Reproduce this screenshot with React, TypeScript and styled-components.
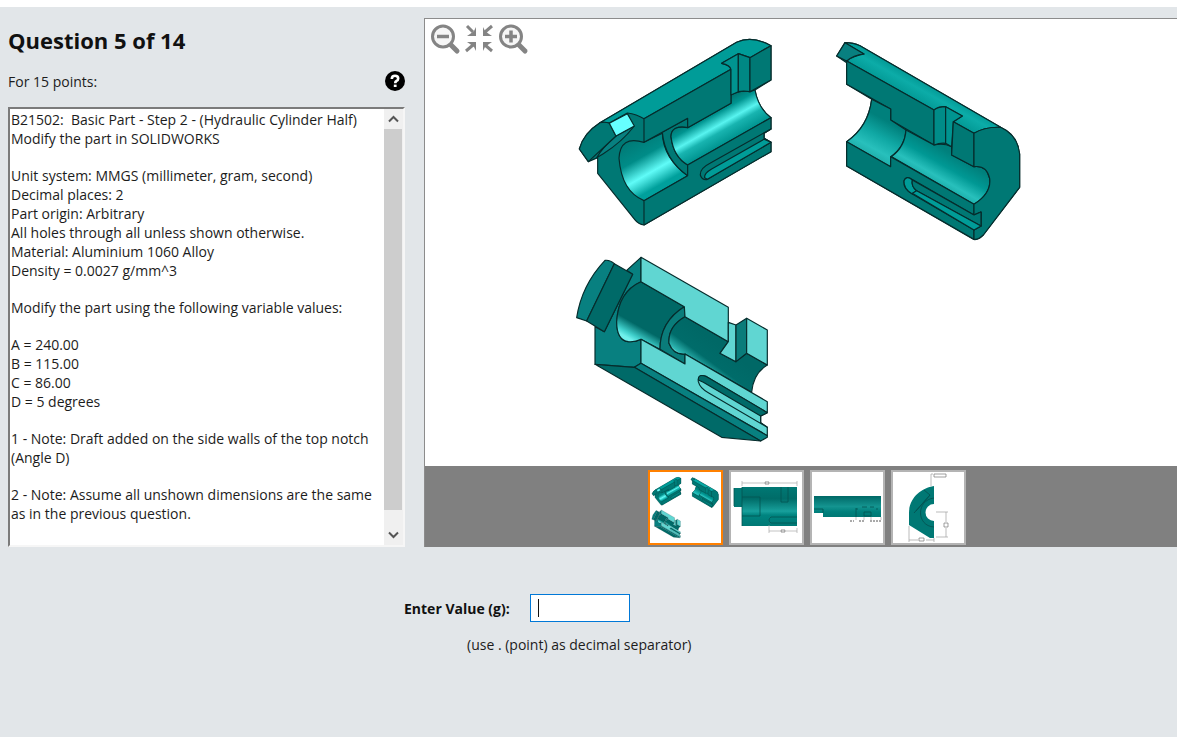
import React from "react";
import styled, { createGlobalStyle } from "styled-components";

const GlobalStyle = createGlobalStyle`
  * { box-sizing: border-box; }
  body {
    margin: 0;
    background: #e2e6e9;
    color: #1c1c1c;
    font-family: "Open Sans", "Noto Sans", sans-serif;
    font-size: 14px;
    line-height: 19px;
  }
`;

const Page = styled.main`
  border-top: 7px solid #fff;
  min-height: 100vh;
`;

const Columns = styled.div`
  display: grid;
  grid-template-columns: 397px minmax(0, 1fr);
  column-gap: 19px;
  padding: 11px 0 0 8px;
`;

const QuestionColumn = styled.section`
  display: flex;
  flex-direction: column;
`;

const Title = styled.h1`
  margin: 8px 0 0;
  font-size: 22px;
  line-height: 28px;
  font-weight: 700;
  color: #111;
`;

const PointsRow = styled.div`
  display: flex;
  justify-content: space-between;
  align-items: center;
  margin-top: 15px;
  height: 24px;
`;

const HelpButton = styled.button`
  display: flex;
  padding: 0;
  border: 0;
  background: none;
`;

const TextPanel = styled.div`
  display: flex;
  flex: 1;
  margin-top: 14px;
  background: #fff;
  border: 2px solid;
  border-color: #7b7b7b #f6f6f6 #f6f6f6 #7b7b7b;
`;

const Description = styled.div`
  flex: 1;
  padding: 1px 0 0 1px;
`;

const Paragraph = styled.p`
  margin: 0 0 18px;
  white-space: pre;
`;

const Scrollbar = styled.div`
  display: flex;
  flex-direction: column;
  width: 19px;
  padding-right: 1px;
  background: #f0f0f0;
`;

const ScrollButton = styled.button`
  display: flex;
  align-items: center;
  justify-content: center;
  height: 20px;
  padding: 0;
  border: 0;
  background: #f0f0f0;
`;

const ScrollThumb = styled.div`
  flex: 1;
  margin-bottom: 15px;
  background: #cdcdcd;
`;

const Viewer = styled.section`
  display: flex;
  flex-direction: column;
  border: solid #8c8c8c;
  border-width: 1px 0 0 1px;
  background: #fff;
`;

const Stage = styled.div`
  position: relative;
  display: flex;
  justify-content: center;
  padding: 6px 0 11px;
`;

const Tools = styled.div`
  position: absolute;
  top: 4px;
  left: 4px;
  display: flex;
  gap: 2px;
`;

const ToolButton = styled.button`
  display: flex;
  padding: 0;
  border: 0;
  background: none;
`;

const Thumbs = styled.div`
  display: flex;
  justify-content: center;
  gap: 6px;
  padding: 4px 0 2px 12px;
  background: #808080;
`;

const Thumb = styled.button<{ $active?: boolean }>`
  display: flex;
  width: 75px;
  height: 75px;
  padding: 0;
  background: #fff;
  border: 2px solid ${(p) => (p.$active ? "#ff8000" : "#b4b4b4")};
`;

const AnswerForm = styled.form`
  padding: 47px 0 0 404px;
`;

const AnswerRow = styled.div`
  display: flex;
  align-items: center;
  gap: 20px;
`;

const AnswerLabel = styled.label`
  width: 106px;
  font-weight: 700;
  color: #111;
  white-space: nowrap;
`;

const AnswerInput = styled.input`
  width: 100px;
  height: 28px;
  padding: 0 8px;
  border: 1px solid #0078d7;
  outline: none;
  font: inherit;
  caret-color: transparent;
  background: #fff linear-gradient(#111, #111) 7px 4px / 1px 18px no-repeat;
`;

const Hint = styled.p`
  margin: 13px 0 0 63px;
`;

const DARK = "#007874";
const LIGHT = "#009c98";
const SHADE = "#006a68";
const MID = "#088080";
const PALE = "#60d6d2";

type Shape = [d: string, fill: string];

const topLeftView: Shape[] = [
  ["M83 445V398L55 410L28 372Q40 325 90 293L500 52Q545 30 603 62V165L555 195Q565 250 603 278V312L582 325V340L603 352V380L222 600Q205 598 195 585Z", DARK],
  ["M90 293L500 52Q545 30 603 62L540 98L505 86L455 115Q480 120 483 133L222 281Q200 268 172 264L118 294Q104 291 90 293Z", LIGHT],
  ["M80 398Q95 370 138 333L193 303Q155 352 100 386Z", MID],
  ["M28 372Q40 325 90 293Q108 290 118 295L138 333L55 410Z", DARK],
  ["M118 295L172 266L193 303L138 333Z", "#66ffff"],
  ["M222 352Q150 330 147 400Q155 500 222 527L353 452Q280 400 277 325Z", "url(#boreA)"],
  ["M277 322L353 280V308Q305 300 303 335Q310 395 353 420V452Q285 405 277 322Z", DARK],
  ["M353 308Q303 300 303 335Q310 395 353 420L603 278Q565 250 555 195L540 200Q510 195 483 210V235Z", "url(#boreA2)"],
  ["M222 281L483 133V235L353 308V280L222 352Z", DARK],
  ["M455 115L505 86V200L483 210V133Q480 120 455 115Z", "#009490"],
  ["M505 86L540 98V200Q520 196 505 200Z", "#008884"],
  ["M540 98L603 62V165L540 200Z", DARK],
  ["M222 527L353 452V420L603 278V312L582 325V340L603 352V380L222 600Z", DARK],
  ["M603 312L420 415Q390 430 391 450Q395 465 410 464L603 352L582 340V325Z", DARK],
  ["M582 343L425 432Q402 445 404 458L412 463L603 352Z", LIGHT],
];

const topRightView: Shape[] = [
  ["M35 78L60 38Q85 38 105 47L527 292Q578 315 584 372V472L475 615Q455 632 445 628L65 408V335Q130 290 140 208L65 163V98Z", DARK],
  ["M60 38Q85 38 105 47L527 292Q480 290 447 310L385 275L412 258L362 230Q340 230 327 240L65 93Q85 78 117 72Z", "url(#top)"],
  ["M35 78L60 38L117 72Q85 75 65 93Z", MID],
  ["M65 93L327 240V345L197 270V237L65 163Z", DARK],
  ["M140 208L197 237V270L243 300Q240 350 197 380V410L65 335Q130 290 140 208Z", "url(#boreB)"],
  ["M243 300L327 345Q355 338 380 350V375L447 410Q485 405 494 445Q500 490 447 523L200 380Q240 350 243 300Z", "url(#boreB2)"],
  ["M327 240Q340 230 362 230V340Q345 338 327 345Z", "#008c88"],
  ["M362 230L412 258L385 275L380 350L362 340Z", "#009490"],
  ["M385 275L447 310V410L380 375Z", DARK],
  ["M65 335L197 410V380L447 523V628L65 408Z", DARK],
  ["M447 310Q480 290 527 292Q578 315 584 372V472L475 615Q460 630 447 628V600L468 588V546L447 555V523Q500 490 494 445Q485 405 447 410Z", DARK],
  ["M447 555L265 450Q240 435 237 455Q236 478 262 492L447 600L468 588V546Z", DARK],
  ["M237 452Q245 435 262 450Q258 470 275 482L262 492Q235 476 237 452Z", LIGHT],
  ["M262 450L447 555L468 546V588L275 482Q258 470 262 450Z", DARK],
  ["M262 490L275 482L468 588L447 600Z", LIGHT],
];

const bottomView: Shape[] = [
  ["M185 76L228 37V110Q160 140 155 230Q155 285 190 290Q210 292 228 283V355L208 367L90 358V245L118 260L203 88Z", MID],
  ["M35 218Q50 120 120 46Q135 44 148 56Q105 145 65 228Z", MID],
  ["M148 56L203 88L118 260L65 228Q105 145 148 56Z", SHADE],
  ["M228 110L358 185Q285 230 285 313L228 283Q210 292 190 290Q155 285 155 230Q160 140 228 110Z", "url(#boreC)"],
  ["M358 185L360 215Q308 245 312 295Q325 330 360 327V357L285 313Q285 230 358 185Z", "#0a7c7a"],
  ["M360 215L490 290L465 325L513 350L545 325L607 360Q565 385 560 442L360 327Q325 330 312 295Q308 245 360 215Z", "url(#boreC2)"],
  ["M228 37L490 187V290L360 215L358 185L228 110Z", PALE],
  ["M490 232L513 240V350L465 325L490 290Z", PALE],
  ["M513 240L545 220V325L513 350Z", "#0a7c7a"],
  ["M545 220L607 255V360L545 325Z", PALE],
  ["M228 283L360 357V327L607 470V500L587 513V533L607 547V572L228 355Z", PALE],
  ["M607 503L425 395Q398 385 400 410Q405 430 430 443L607 547L587 533V513Z", PALE],
  ["M607 503L425 395Q398 385 400 405L415 412L587 513Z", SHADE],
  ["M228 355L607 572V577L587 588L208 367Z", MID],
  ["M90 358L208 367L587 588L470 577Z", SHADE],
];

const Solid = ({ shapes, transform }: { shapes: Shape[]; transform: string }) => (
  <g transform={transform} stroke="#062c2c" strokeWidth="3.5" strokeLinejoin="round">
    {shapes.map(([d, fill]) => (
      <path key={d} d={d} fill={fill} />
    ))}
  </g>
);

type Stops = [number, string][];
const Gradient = ({ id, from, to, stops }: { id: string; from: [number, number]; to: [number, number]; stops: Stops }) => (
  <linearGradient id={id} gradientUnits="userSpaceOnUse" x1={from[0]} y1={from[1]} x2={to[0]} y2={to[1]}>
    {stops.map(([offset, color]) => (
      <stop key={offset} offset={offset} stopColor={color} />
    ))}
  </linearGradient>
);

const IsometricViews = ({ width, height }: { width: number; height: number }) => (
  <svg width={width} height={height} viewBox="0 0 472 430" role="img" aria-label="Isometric views of the cylinder half">
    <defs>
      <Gradient id="boreA" from={[180, 340]} to={[262, 484]} stops={[[0, "#007874"], [0.4, "#008c88"], [0.72, "#60fcf8"], [0.82, "#40dcd8"], [1, "#00a09c"]]} />
      <Gradient id="boreA2" from={[400, 262]} to={[455, 360]} stops={[[0, "#007874"], [0.2, "#009490"], [0.5, "#58f4f0"], [0.68, "#18b4b0"], [1, "#009490"]]} />
      <Gradient id="top" from={[300, 150]} to={[262, 218]} stops={[[0, "#009490"], [0.4, "#0caca8"], [1, "#009490"]]} />
      <Gradient id="boreB" from={[180, 270]} to={[125, 370]} stops={[[0, "#00807c"], [0.45, "#10a8a4"], [0.8, "#28c0bc"], [1, "#20b0ac"]]} />
      <Gradient id="boreB2" from={[376, 368]} to={[322, 462]} stops={[[0, "#00807c"], [0.4, "#009894"], [0.75, "#28c0bc"], [1, "#18a8a4"]]} />
      <Gradient id="boreC" from={[262, 185]} to={[204, 287]} stops={[[0, "#006866"], [0.6, "#006866"], [0.88, "#40d0cc"], [1, "#70f0ec"]]} />
      <Gradient id="boreC2" from={[450, 290]} to={[395, 365]} stops={[[0, "#006866"], [0.6, "#006c6a"], [0.95, "#30b8b4"], [1, "#60d8d4"]]} />
    </defs>
    <Solid shapes={topLeftView} transform="translate(5 0) scale(.3333)" />
    <Solid shapes={topRightView} transform="translate(260 5) scale(.3333)" />
    <Solid shapes={bottomView} transform="translate(0 220) scale(.3333)" />
  </svg>
);

const SideThumb = () => (
  <svg width="71" height="71" viewBox="0 0 71 71">
    <defs>
      <linearGradient id="side" x1="0" x2="0" y1="0" y2="1">
        <stop offset="0" stopColor="#007874" />
        <stop offset=".3" stopColor="#006c68" />
        <stop offset=".62" stopColor="#18a09c" />
        <stop offset=".72" stopColor="#008480" />
        <stop offset="1" stopColor="#007874" />
      </linearGradient>
    </defs>
    <path d="M3 16h9v19H3z" fill="#007874" />
    <path d="M11 15h55v39H11z" fill="url(#side)" />
    <path d="M11 15v39M11 25h18v19H11M50 15v15h7V15M3 16v18M66 45H40q-4 3 0 6h26" fill="none" stroke="#045452" strokeWidth=".8" />
    <path d="M11 11h22m6 0h27M11 9v5m55-5v5M38 59h11m6 0h11M38 53v8m28-5v5" stroke="#aaa" strokeWidth=".7" />
    <path d="M34 10h4v2h-4zM50 58h4v2h-4z" fill="none" stroke="#666" strokeWidth=".7" />
  </svg>
);

const BottomThumb = () => (
  <svg width="71" height="71" viewBox="0 0 71 71">
    <defs>
      <linearGradient id="under" x1="0" x2="0" y1="0" y2="1">
        <stop offset="0" stopColor="#006866" />
        <stop offset=".5" stopColor="#149490" />
        <stop offset=".75" stopColor="#00807c" />
        <stop offset="1" stopColor="#007874" />
      </linearGradient>
    </defs>
    <path d="M2 24h67v21H11v-4H2z" fill="url(#under)" />
    <path d="M2 37h9v4M44 36v9M52 40h7v4h-7zM50 35h5m3 0h4M44 37h2m18 0h2" fill="none" stroke="#045452" strokeWidth=".8" />
    <path d="M38 49h4m5 0h6m5 0h11" stroke="#555" strokeDasharray="2 1" />
    <path d="M44 45v3m8-3v3m7-3v3m10-3v3" stroke="#aaa" strokeWidth=".7" />
  </svg>
);

const FrontThumb = () => (
  <svg width="71" height="71" viewBox="0 0 71 71">
    <path d="M41 14C28 16 16 26 16 41v12l21 13h4V49a8.500 8.500 0 0 1 0-17z" fill="#007874" />
    <path d="m31 18 6 5-16 18M37 23 23 39M41 26c-18 2-18 28 0 29" fill="none" stroke="#045452" strokeWidth=".9" />
    <path d="M16 54v16m0-2h9m8 0h8M41 66v4M43 40h12M43 65h12M53 40v10m0 6v9M38 14V2h2" fill="none" stroke="#aaa" strokeWidth=".8" />
    <path d="M41 2h12v3H41zM26 66h5v3h-5zM51 51h4v4h-4z" fill="#fff" stroke="#777" strokeWidth=".7" />
  </svg>
);

const Magnifier = ({ plus }: { plus?: boolean }) => (
  <svg width="32" height="32" viewBox="0 0 32 32" fill="none" stroke="#848484">
    <path d="m22 22 6 6" strokeWidth="5" strokeLinecap="round" />
    <circle cx="14" cy="13.500" r="10.500" strokeWidth="3" fill="#f6f6f6" />
    <path d={plus ? "M8 13.500h12M14 7.500v12" : "M8 13.500h12"} strokeWidth="3.500" />
  </svg>
);

const FitIcon = () => (
  <svg width="32" height="32" viewBox="0 0 32 32">
    <g fill="none" stroke="#848484" strokeWidth="3">
      <path d="m4 3 6 6M29 3l-7 6M3 28l7-6M29 28l-7-6" />
    </g>
    <path d="M13 4v9H4l3-2 4-3zM20 4v9h9l-3-2-4-3zM13 28v-9H4l3 2 4 3zM20 28v-9h9l-3 2-4 3z" fill="#848484" />
  </svg>
);

const Chevron = ({ up }: { up?: boolean }) => (
  <svg width="11" height="8" viewBox="0 0 11 8" fill="none" stroke="#555" strokeWidth="2">
    <path d={up ? "M1 6.500 5.500 2 10 6.500" : "M1 1.500 5.500 6 10 1.500"} />
  </svg>
);

const paragraphs = [
  "B21502:  Basic Part - Step 2 - (Hydraulic Cylinder Half)\nModify the part in SOLIDWORKS",
  "Unit system: MMGS (millimeter, gram, second)\nDecimal places: 2\nPart origin: Arbitrary\nAll holes through all unless shown otherwise.\nMaterial: Aluminium 1060 Alloy\nDensity = 0.0027 g/mm^3",
  "Modify the part using the following variable values:",
  "A = 240.00\nB = 115.00\nC = 86.00\nD = 5 degrees",
  "1 - Note: Draft added on the side walls of the top notch\n(Angle D)",
  "2 - Note: Assume all unshown dimensions are the same\nas in the previous question.",
];

export default function App() {
  return (
    <Page>
      <GlobalStyle />
      <Columns>
        <QuestionColumn>
          <Title>Question 5 of 14</Title>
          <PointsRow>
            <span>For 15 points:</span>
            <HelpButton type="button" aria-label="Help">
              <svg width="20" height="20" viewBox="0 0 20 20">
                <circle cx="10" cy="10" r="10" fill="#000" />
                <path d="M6.800 8Q6.800 4.700 10 4.700T13.200 7.500Q13.200 9 11.500 10Q10.200 10.700 10.200 12.200" fill="none" stroke="#fff" strokeWidth="2.600" />
                <path d="M8.800 13.600h2.800V16H8.800z" fill="#fff" />
              </svg>
            </HelpButton>
          </PointsRow>
          <TextPanel>
            <Description>
              {paragraphs.map((text) => (
                <Paragraph key={text}>{text}</Paragraph>
              ))}
            </Description>
            <Scrollbar>
              <ScrollButton type="button" aria-label="Scroll up">
                <Chevron up />
              </ScrollButton>
              <ScrollThumb />
              <ScrollButton type="button" aria-label="Scroll down">
                <Chevron />
              </ScrollButton>
            </Scrollbar>
          </TextPanel>
        </QuestionColumn>
        <Viewer>
          <Stage>
            <Tools>
              <ToolButton type="button" aria-label="Zoom out"><Magnifier /></ToolButton>
              <ToolButton type="button" aria-label="Fit to window"><FitIcon /></ToolButton>
              <ToolButton type="button" aria-label="Zoom in"><Magnifier plus /></ToolButton>
            </Tools>
            <IsometricViews width={472} height={430} />
          </Stage>
          <Thumbs>
            <Thumb type="button" $active aria-label="Isometric views">
              <IsometricViews width={71} height={71} />
            </Thumb>
            <Thumb type="button" aria-label="Side view"><SideThumb /></Thumb>
            <Thumb type="button" aria-label="Bottom view"><BottomThumb /></Thumb>
            <Thumb type="button" aria-label="Front view"><FrontThumb /></Thumb>
          </Thumbs>
        </Viewer>
      </Columns>
      <AnswerForm>
        <AnswerRow>
          <AnswerLabel htmlFor="answer">Enter Value (g):</AnswerLabel>
          <AnswerInput id="answer" type="text" autoFocus aria-describedby="answer-hint" />
        </AnswerRow>
        <Hint id="answer-hint">(use . (point) as decimal separator)</Hint>
      </AnswerForm>
    </Page>
  );
}
